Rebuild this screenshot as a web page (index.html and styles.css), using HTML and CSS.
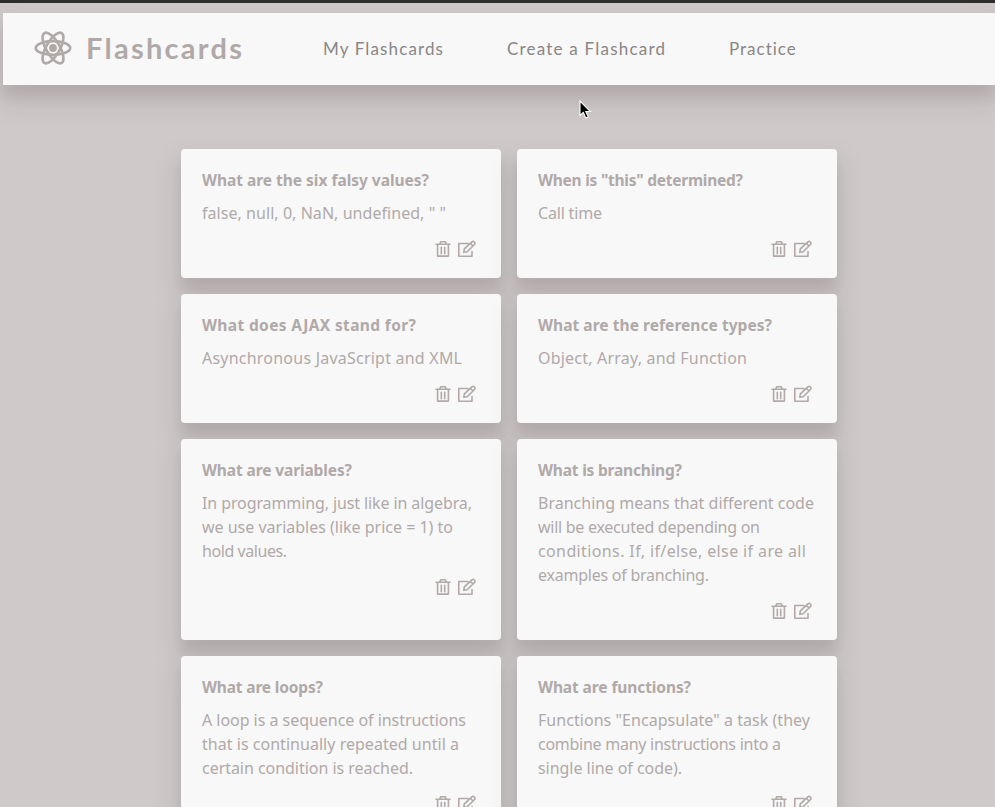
FILE: index.html
```html
<!DOCTYPE html>
<html lang="en">
<head>
<meta charset="utf-8">
<title>Flashcards</title>
<link rel="stylesheet" href="styles.css">
</head>
<body>
<svg width="0" height="0" class="defs" aria-hidden="true">
  <symbol id="trash" viewBox="0 0 16 18">
    <path d="M1 4.2h14M2.6 4.2v11.9h10.8V4.2M4.8 4l.9-2.2h4.6l.9 2.2M6.3 7.2v6.6M9.7 7.2v6.6" fill="none" stroke="currentColor" stroke-width="1.6" stroke-linejoin="round" stroke-linecap="round"/>
  </symbol>
  <symbol id="edit" viewBox="0 0 20 18">
    <path d="M11 3.5H1.8v12.8h13.2v-4.8M6.8 12.3l.5-3.4 7.6-7.1q1.3-.9 2.5.2 1.1 1.3.1 2.5l-7.3 7.3zM13.4 3.4l2.6 2.6" fill="none" stroke="currentColor" stroke-width="1.6" stroke-linejoin="round" stroke-linecap="round"/>
  </symbol>
</svg>
<header class="navbar">
  <div class="brand">
    <svg class="logo" viewBox="0 0 38 34" fill="none" stroke="currentColor" stroke-width="2.7">
      <ellipse cx="19" cy="17" rx="17.2" ry="6.8"/>
      <ellipse cx="19" cy="17" rx="17.2" ry="6.8" transform="rotate(60 19 17)"/>
      <ellipse cx="19" cy="17" rx="17.2" ry="6.8" transform="rotate(120 19 17)"/>
      <circle cx="19" cy="17" r="3.9" fill="currentColor" stroke="none"/>
    </svg>
    <span class="name" data-w="156">Flashcards</span>
  </div>
  <nav class="links">
    <a data-w="120">My Flashcards</a>
    <a data-w="158">Create a Flashcard</a>
    <a data-w="67">Practice</a>
  </nav>
</header>
<main class="cards">
  <article class="card">
    <h2><span data-w="227">What are the six falsy values?</span></h2>
    <p><span data-w="244">false, null, 0, NaN, undefined, " "</span></p>
    <div class="actions"><svg class="trash"><use href="#trash"/></svg><svg class="edit"><use href="#edit"/></svg></div>
  </article>
  <article class="card">
    <h2><span data-w="205">When is "this" determined?</span></h2>
    <p><span data-w="64">Call time</span></p>
    <div class="actions"><svg class="trash"><use href="#trash"/></svg><svg class="edit"><use href="#edit"/></svg></div>
  </article>
  <article class="card">
    <h2><span data-w="214">What does AJAX stand for?</span></h2>
    <p><span data-w="260">Asynchronous JavaScript and XML</span></p>
    <div class="actions"><svg class="trash"><use href="#trash"/></svg><svg class="edit"><use href="#edit"/></svg></div>
  </article>
  <article class="card">
    <h2><span data-w="234">What are the reference types?</span></h2>
    <p><span data-w="209">Object, Array, and Function</span></p>
    <div class="actions"><svg class="trash"><use href="#trash"/></svg><svg class="edit"><use href="#edit"/></svg></div>
  </article>
  <article class="card">
    <h2><span data-w="150">What are variables?</span></h2>
    <p><span data-w="270">In programming, just like in algebra,</span><br><span data-w="251">we use variables (like price = 1) to</span><br><span data-w="85">hold values.</span></p>
    <div class="actions"><svg class="trash"><use href="#trash"/></svg><svg class="edit"><use href="#edit"/></svg></div>
  </article>
  <article class="card">
    <h2><span data-w="144">What is branching?</span></h2>
    <p><span data-w="276">Branching means that different code</span><br><span data-w="222">will be executed depending on</span><br><span data-w="268">conditions. If, if/else, else if are all</span><br><span data-w="171">examples of branching.</span></p>
    <div class="actions"><svg class="trash"><use href="#trash"/></svg><svg class="edit"><use href="#edit"/></svg></div>
  </article>
  <article class="card">
    <h2><span data-w="121">What are loops?</span></h2>
    <p><span data-w="264">A loop is a sequence of instructions</span><br><span data-w="257">that is continually repeated until a</span><br><span data-w="211">certain condition is reached.</span></p>
    <div class="actions"><svg class="trash"><use href="#trash"/></svg><svg class="edit"><use href="#edit"/></svg></div>
  </article>
  <article class="card">
    <h2><span data-w="153">What are functions?</span></h2>
    <p><span data-w="272">Functions "Encapsulate" a task (they</span><br><span data-w="243">combine many instructions into a</span><br><span data-w="144">single line of code).</span></p>
    <div class="actions"><svg class="trash"><use href="#trash"/></svg><svg class="edit"><use href="#edit"/></svg></div>
  </article>
</main>
<svg class="cursor" viewBox="0 0 13 20"><path d="M1 1v14.4l3.3-3 2.5 5.6 2.4-1.1-2.4-5.4h4.6z" fill="#000" stroke="#fff" stroke-width="1.1"/></svg>
<script src="fit.js"></script>
</body>
</html>
```
FILE: styles.css
```css
* { box-sizing: border-box; }

body {
  margin: 0;
  height: 100vh;
  overflow: hidden;
  padding: 10px 0 0 3px;
  border-top: 3px solid #2d2c2c;
  background: #cfc9c9;
  color: #b0a9a8;
  font: 16px/24px "Noto Sans", sans-serif;
}

.defs { position: absolute; }

.navbar,
.card {
  background: #f8f8f8;
  box-shadow: 0 14px 28px 6px rgba(20, 12, 12, .08), 0 12px 12px rgba(20, 12, 12, .08);
}

.navbar {
  display: flex;
  align-items: center;
  height: 72px;
  padding-left: 31px;
}

.brand {
  display: flex;
  align-items: center;
  gap: 14px;
  width: 289px;
}

.logo { width: 38px; height: 36px; margin-top: -3px; overflow: visible; }

.name {
  font: 700 29px/36px Lato, sans-serif;
  margin-top: -2px;
  white-space: nowrap;
}

.links {
  display: flex;
  gap: 64px;
  font: 17px/24px Lato, sans-serif;
  color: #8a8686;
  white-space: nowrap;
}

.cards {
  display: grid;
  grid-template-columns: 320px 320px;
  gap: 16px;
  padding: 64px 0 0 178px;
}

.card {
  padding: 22px 21px 20px;
  border-radius: 4px;
  white-space: nowrap;
}

.card h2 {
  margin: 0 0 11px;
  font-size: 15.5px;
  line-height: 19.2px;
  font-weight: 700;
}

.card p { margin: 0 0 14.8px; }

.actions {
  display: flex;
  justify-content: flex-end;
  gap: 6px;
  padding-right: 3px;
}

.trash { width: 16px; height: 18px; }
.edit { width: 20px; height: 18px; }

.cursor {
  position: absolute;
  left: 579px;
  top: 100px;
  width: 13px;
  height: 20px;
}
```
FILE: fit.js
```js
// Track each line of text to its design width.
document.querySelectorAll('[data-w]').forEach(function (el) {
  var width = el.getBoundingClientRect().width;
  var gap = (Number(el.dataset.w) - width) / (el.textContent.length - 1);
  el.style.letterSpacing = gap.toFixed(3) + 'px';
  el.style.marginRight = (-gap).toFixed(3) + 'px';
});
```
